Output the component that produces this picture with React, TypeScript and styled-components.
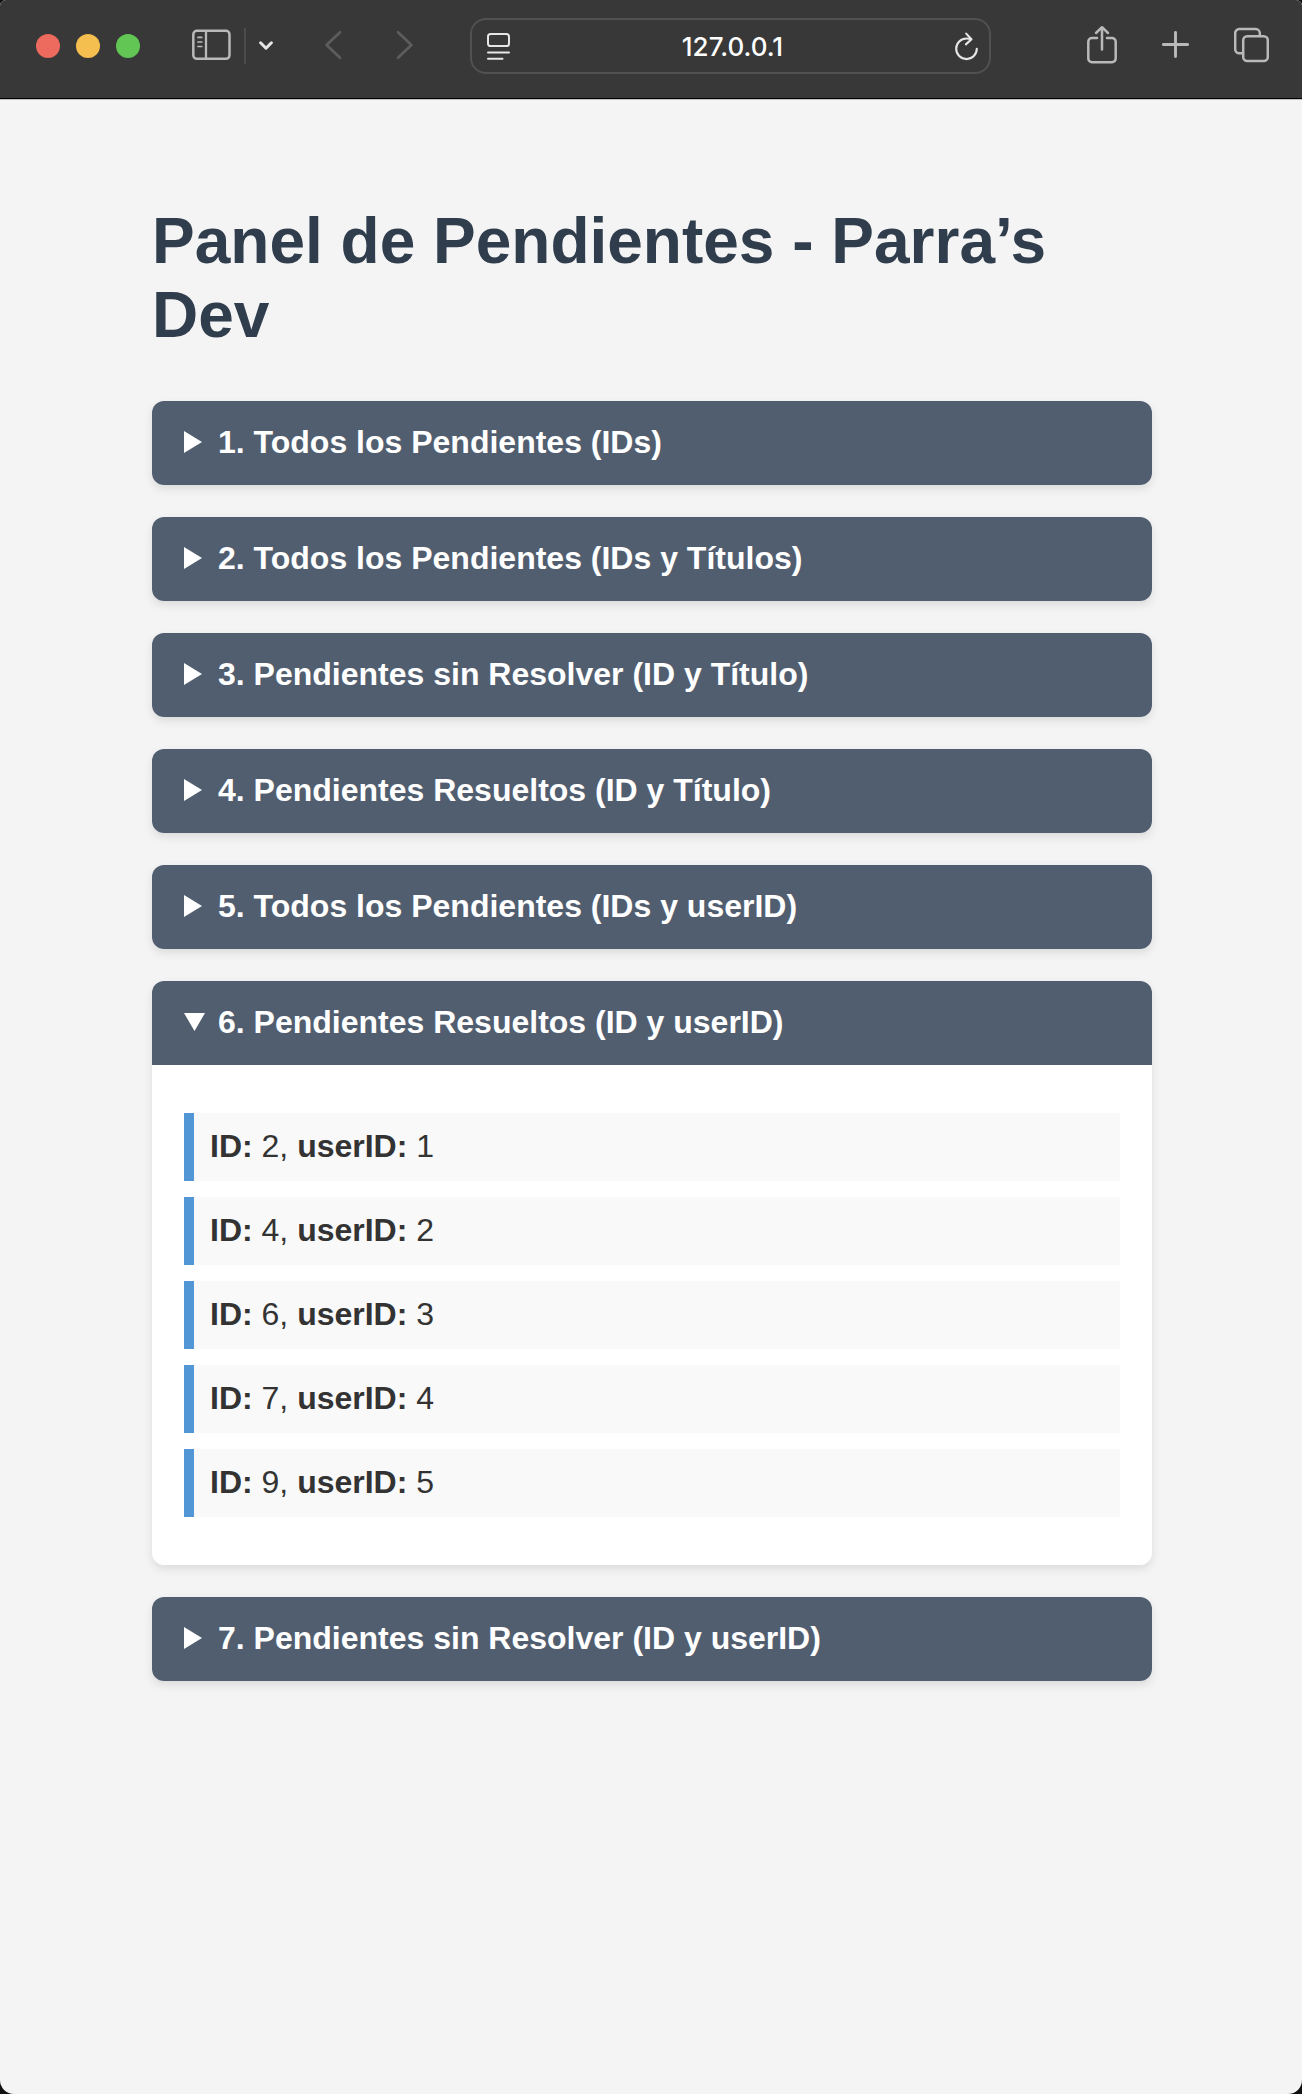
import React from "react";
import styled, { createGlobalStyle } from "styled-components";

const GlobalStyle = createGlobalStyle`
  *, *::before, *::after { box-sizing: border-box; }
  body {
    margin: 0;
    background: #111111;
    font-family: "Liberation Sans", Arial, sans-serif;
    color: #333333;
  }
`;

const Window = styled.div`
  display: flex;
  flex-direction: column;
  min-height: 100vh;
  overflow: hidden;
  border-radius: 6px 6px 14px 14px;
  background: #f4f4f4;
`;

const Toolbar = styled.header`
  display: flex;
  align-items: center;
  padding: 0 33px 6px 36px;
  background: #383838;
  border-bottom: 1px solid #000000;
  box-shadow: 0 1px 0 #c4c0c1;
`;

const Group = styled.div<{ $gap: number }>`
  display: flex;
  align-items: center;
  gap: ${(p) => p.$gap}px;
`;

const WindowButton = styled.button<{ $color: string }>`
  width: 24px;
  height: 24px;
  padding: 0;
  border: 0;
  border-radius: 50%;
  background: ${(p) => p.$color};
`;

const IconButton = styled.button<{ $color: string }>`
  display: flex;
  padding: 0;
  border: 0;
  background: none;
  color: ${(p) => p.$color};

  svg {
    display: block;
    fill: none;
    stroke: currentColor;
    stroke-linecap: round;
    stroke-linejoin: round;
  }
`;

const SidebarGroup = styled(Group)`
  margin-left: 52px;
`;

const NavGroup = styled(Group)`
  margin: 0 56px 0 52px;
`;

const Divider = styled.span`
  width: 2px;
  height: 36px;
  background: #4c4c4c;
`;

const AddressBar = styled.form`
  display: flex;
  flex: 1;
  align-items: center;
  min-width: 0;
  height: 56px;
  margin: 18px 96px 18px 0;
  padding: 0 11px 0 15px;
  border: 2px solid #515151;
  border-radius: 16px;
`;

const AddressInput = styled.input`
  flex: 1;
  min-width: 0;
  padding: 2px 0 0;
  border: 0;
  outline: 0;
  background: none;
  color: #ffffff;
  font: 500 26px/32px Inter, "Liberation Sans", sans-serif;
  text-align: center;
`;

const Main = styled.main`
  width: 100%;
  max-width: 1066px;
  margin: 0 auto;
  padding: 105px 32px 64px 34px;
`;

const Title = styled.h1`
  margin: 0 0 49px;
  color: #303d4d;
  font-size: 64px;
  line-height: 74px;
`;

const Sections = styled.div`
  display: flex;
  flex-direction: column;
  gap: 32px;
`;

const Section = styled.details`
  overflow: hidden;
  border-radius: 12px;
  background: #ffffff;
  box-shadow: 0 4px 10px rgba(0, 0, 0, 0.1);
`;

const Heading = styled.summary`
  display: flex;
  align-items: center;
  padding: 23px 32px 25px;
  background: #515e70;
  color: #ffffff;
  font-size: 32px;
  font-weight: 700;
  line-height: 36px;
  list-style: none;
  cursor: pointer;

  &::-webkit-details-marker { display: none; }

  &::before {
    content: "";
    width: 18px;
    height: 22px;
    margin-right: 16px;
    background: currentColor;
    clip-path: polygon(0 0, 100% 50%, 0 100%);
  }

  ${Section}[open] > &::before {
    width: 21px;
    height: 18px;
    margin-right: 13px;
    clip-path: polygon(0 0, 100% 0, 50% 100%);
  }
`;

const List = styled.ul`
  display: flex;
  flex-direction: column;
  gap: 16px;
  margin: 0;
  padding: 48px 32px;
  list-style: none;
`;

const Item = styled.li`
  padding: 15px 16px 17px;
  border-left: 10px solid #5296d5;
  background: #f9f9f9;
  font-size: 32px;
  line-height: 36px;
`;

type Pending = { id: number; userId: number };

const resolved: Pending[] = [
  { id: 2, userId: 1 },
  { id: 4, userId: 2 },
  { id: 6, userId: 3 },
  { id: 7, userId: 4 },
  { id: 9, userId: 5 },
];

const sections: { title: string; items?: Pending[] }[] = [
  { title: "1. Todos los Pendientes (IDs)" },
  { title: "2. Todos los Pendientes (IDs y Títulos)" },
  { title: "3. Pendientes sin Resolver (ID y Título)" },
  { title: "4. Pendientes Resueltos (ID y Título)" },
  { title: "5. Todos los Pendientes (IDs y userID)" },
  { title: "6. Pendientes Resueltos (ID y userID)", items: resolved },
  { title: "7. Pendientes sin Resolver (ID y userID)" },
];

function BrowserBar() {
  return (
    <Toolbar>
      <Group $gap={16}>
        <WindowButton $color="#ed6a5f" aria-label="Cerrar" />
        <WindowButton $color="#f5bf50" aria-label="Minimizar" />
        <WindowButton $color="#62c655" aria-label="Ampliar" />
      </Group>
      <SidebarGroup $gap={13}>
        <IconButton $color="#b9b9b9" aria-label="Barra lateral">
          <svg width="39" height="48" viewBox="0 0 39 48" strokeWidth="2.5">
            <rect x="1.3" y="8.8" width="36.2" height="28" rx="3.6" />
            <path d="M14 9v28" strokeWidth="2.3" />
            <path d="M6 15.4h3.8M6 20h3.8M6 24.5h3.8" strokeWidth="1.7" />
          </svg>
        </IconButton>
        <Divider />
        <IconButton $color="#e6e6e6" aria-label="Grupos de pestañas">
          <svg width="14" height="48" viewBox="0 0 14 48" strokeWidth="3">
            <path d="M1.6 20.8 7 26.2l5.4-5.4" />
          </svg>
        </IconButton>
      </SidebarGroup>
      <NavGroup $gap={55}>
        <IconButton $color="#5d5d5d" aria-label="Atrás">
          <svg width="17" height="48" viewBox="0 0 17 48" strokeWidth="2.7">
            <path d="M15 10.2 1.6 23 15 35.8" />
          </svg>
        </IconButton>
        <IconButton $color="#5d5d5d" aria-label="Adelante">
          <svg width="17" height="48" viewBox="0 0 17 48" strokeWidth="2.7">
            <path d="M1 10.2 14.4 23 1 35.8" />
          </svg>
        </IconButton>
      </NavGroup>
      <AddressBar>
        <IconButton type="button" $color="#e6e6e6" aria-label="Lector">
          <svg width="23" height="48" viewBox="0 0 23 48" strokeWidth="2">
            <rect x="1" y="12" width="21" height="12" rx="2.6" />
            <path d="M1 30.4h21M1 36.8h14.5" />
          </svg>
        </IconButton>
        <AddressInput aria-label="Dirección" defaultValue="127.0.0.1" />
        <IconButton type="button" $color="#e6e6e6" aria-label="Recargar">
          <svg width="23" height="48" viewBox="0 0 23 48" strokeWidth="2.1">
            <path d="M16 17.2C14.600 16.700 13 16.500 11.500 16.500A10.300 10.300 0 1 0 21.800 26.800" />
            <path d="m11.200 11.600 5.300 5.700-5.600 5.100" />
          </svg>
        </IconButton>
      </AddressBar>
      <Group $gap={45}>
        <IconButton $color="#b9b9b9" aria-label="Compartir">
          <svg width="30" height="48" viewBox="0 0 30 48" strokeWidth="2.5">
            <path d="M10 16H5a3.7 3.7 0 0 0-3.7 3.7v16.8A3.7 3.7 0 0 0 5 40.2h20a3.7 3.7 0 0 0 3.7-3.7V19.7A3.7 3.7 0 0 0 25 16h-5" />
            <path d="M15 27.5V5.4M9 11l6-5.8 6 5.8" />
          </svg>
        </IconButton>
        <IconButton $color="#b9b9b9" aria-label="Nueva pestaña">
          <svg width="27" height="48" viewBox="0 0 27 48" strokeWidth="2.9">
            <path d="M1.4 22.5h24.2M13.5 10.4v24.2" />
          </svg>
        </IconButton>
        <IconButton $color="#b9b9b9" aria-label="Mostrar pestañas">
          <svg width="35" height="48" viewBox="0 0 35 48" strokeWidth="2.5">
            <rect x="9.2" y="14.2" width="24.6" height="24.8" rx="4" />
            <path d="M9 31.2H5.2a4 4 0 0 1-4-4V11.100a4 4 0 0 1 4-4h16.600a4 4 0 0 1 4 4v2.800" />
          </svg>
        </IconButton>
      </Group>
    </Toolbar>
  );
}

export default function App() {
  return (
    <Window>
      <GlobalStyle />
      <BrowserBar />
      <Main>
        <Title>Panel de Pendientes - Parra’s Dev</Title>
        <Sections>
          {sections.map((section) => (
            <Section key={section.title} open={Boolean(section.items)}>
              <Heading>{section.title}</Heading>
              {section.items && (
                <List>
                  {section.items.map((item) => (
                    <Item key={item.id}>
                      <strong>ID:</strong> {item.id}, <strong>userID:</strong> {item.userId}
                    </Item>
                  ))}
                </List>
              )}
            </Section>
          ))}
        </Sections>
      </Main>
    </Window>
  );
}
